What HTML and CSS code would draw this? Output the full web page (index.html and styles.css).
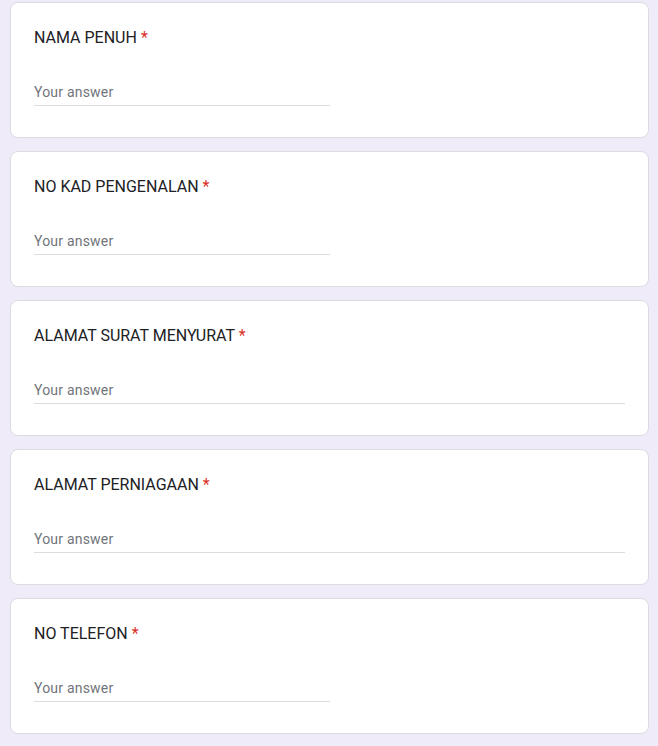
FILE: index.html
```html
<!DOCTYPE html>
<html lang="en">
<head>
    <meta charset="UTF-8">
    <meta name="viewport" content="width=device-width, initial-scale=1.0">
    <title>Borang</title>
    <link rel="stylesheet" href="styles.css">
</head>
<body>
    <div class="form-list">
        <div class="question-card">
            <div class="question-title">NAMA PENUH <span class="required">*</span></div>
            <input class="answer short" type="text" placeholder="Your answer">
        </div>

        <div class="question-card">
            <div class="question-title">NO KAD PENGENALAN <span class="required">*</span></div>
            <input class="answer short" type="text" placeholder="Your answer">
        </div>

        <div class="question-card">
            <div class="question-title">ALAMAT SURAT MENYURAT <span class="required">*</span></div>
            <input class="answer long" type="text" placeholder="Your answer">
        </div>

        <div class="question-card">
            <div class="question-title">ALAMAT PERNIAGAAN <span class="required">*</span></div>
            <input class="answer long" type="text" placeholder="Your answer">
        </div>

        <div class="question-card">
            <div class="question-title">NO TELEFON <span class="required">*</span></div>
            <input class="answer short" type="text" placeholder="Your answer">
        </div>
    </div>
</body>
</html>
```

FILE: styles.css
```css
* {
    margin: 0;
    padding: 0;
    box-sizing: border-box;
    font-family: Roboto, "Liberation Sans", Arial, sans-serif;
}

body {
    background-color: #f0ebf8;
    padding: 2px 9px 0 10px;
}

.form-list {
    display: flex;
    flex-direction: column;
    gap: 13px;
}

.question-card {
    background: white;
    border: 1px solid #dadce0;
    border-radius: 8px;
    padding: 23px 23px 30px;
    height: 136px;
}

.question-title {
    font-size: 16px;
    line-height: 24px;
    color: #202124;
    margin-bottom: 32px;
}

.required {
    color: #d93025;
}

.answer {
    display: block;
    border: none;
    border-bottom: 1px solid #dadce0;
    outline: none;
    font-size: 14px;
    line-height: 20px;
    letter-spacing: 0.2px;
    height: 24px;
    padding: 0 0 3px;
    color: #202124;
    background: transparent;
}

.answer::placeholder {
    color: #70757a;
}

.answer.short {
    width: 50%;
}

.answer.long {
    width: 100%;
}
```
